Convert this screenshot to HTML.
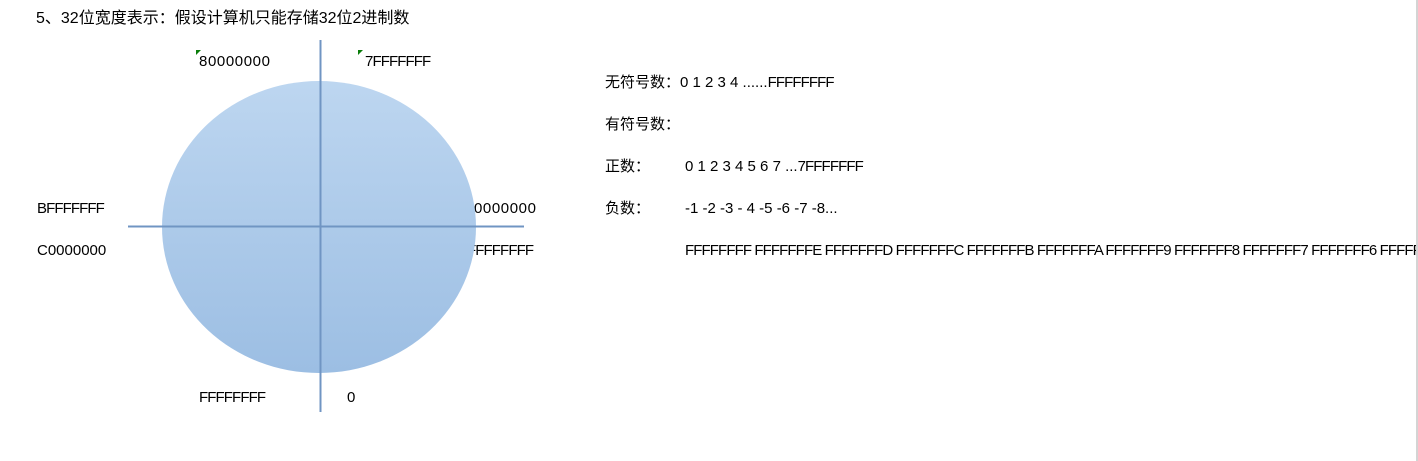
<!DOCTYPE html>
<html><head><meta charset="utf-8"><style>
body{margin:0;width:1418px;height:461px;background:#fff;position:relative;overflow:hidden;font-family:"Liberation Sans","Noto Sans CJK SC",sans-serif;font-size:15px;color:#000}
.t{position:absolute;white-space:nowrap;line-height:16px}
.f{letter-spacing:-0.9px}
.d{letter-spacing:0.6px}
.g{position:absolute;width:0;height:0;border-top:5px solid #0a7d0a;border-right:5px solid transparent}
</style></head><body>
<div class="t" style="left:36px;top:11px;font-size:16px">5、32位宽度表示：假设计算机只能存储32位2进制数</div>
<div class="g" style="left:196px;top:50px"></div>
<div class="t d" style="left:199px;top:54px">80000000</div>
<div class="g" style="left:358px;top:50px"></div>
<div class="t f" style="left:365px;top:54px">7FFFFFFF</div>
<div class="t f" style="left:37px;top:201px">BFFFFFFF</div>
<div class="t" style="left:37px;top:243px">C0000000</div>
<div class="t d" style="left:465px;top:201px">00000000</div>
<div class="t f" style="left:467px;top:243px">FFFFFFFF</div>
<div class="t f" style="left:199px;top:390px">FFFFFFFF</div>
<div class="t" style="left:347px;top:390px">0</div>
<svg style="position:absolute;left:0;top:0" width="560" height="461">
<defs><linearGradient id="a" x1="0" y1="0" x2="0" y2="1"><stop offset="0" stop-color="#bdd6f0"/><stop offset="1" stop-color="#9cbee3"/></linearGradient></defs>
<ellipse cx="319" cy="227" rx="157" ry="146" fill="url(#a)"/>
<line x1="320.5" y1="40" x2="320.5" y2="412" stroke="#7095c3" stroke-width="2"/>
<line x1="128" y1="226.5" x2="524" y2="226.5" stroke="#7095c3" stroke-width="2"/>
</svg>
<div class="t" style="left:605px;top:75px">无符号数：0 1 2 3 4 ......<span class="f">FFFFFFFF</span></div>
<div class="t" style="left:605px;top:117px">有符号数：</div>
<div class="t" style="left:605px;top:159px">正数：</div>
<div class="t" style="left:685px;top:159px">0 1 2 3 4 5 6 7 ...<span class="f">7FFFFFFF</span></div>
<div class="t" style="left:605px;top:201px">负数：</div>
<div class="t" style="left:685px;top:201px">-1 -2 -3 - 4 -5 -6 -7 -8...</div>
<div class="t f" style="left:685px;top:243px">FFFFFFFF FFFFFFFE FFFFFFFD FFFFFFFC FFFFFFFB FFFFFFFA FFFFFFF9 FFFFFFF8 FFFFFFF7 FFFFFFF6 FFFFFFF5</div>
<div style="position:absolute;left:1416px;top:0;width:2px;height:461px;background:#d4d4d4"></div>
</body></html>
